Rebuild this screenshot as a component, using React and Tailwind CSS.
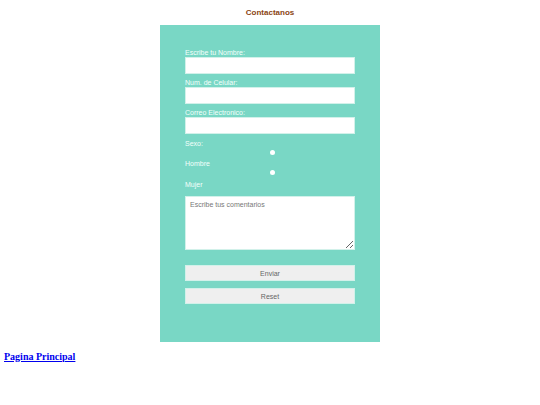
import React from 'react';

const Label = ({ children, className = '' }) => (
  <label className={`block h-[8px] text-[7px] leading-[8px] text-[#f4fffb] ${className}`}>{children}</label>
);

const Field = () => (
  <input type="text" className="block h-[17px] w-full border border-[#d2f1ea] bg-white outline-none" />
);

const Radio = ({ name }) => (
  <div className="mt-[1px] flex h-[6px] items-center justify-center pl-[5px]">
    <input type="radio" name={name} className="h-[5px] w-[5px] appearance-none rounded-full bg-white" />
  </div>
);

const App = () => {
  return (
    <div className="min-h-[405px] bg-white" style={{ fontFamily: '"Liberation Sans", Arial, sans-serif' }}>
      {/* Titulo */}
      <div className="flex h-[25px] items-center justify-center">
        <h2 className="text-[8px] font-bold leading-none text-[#8b4513]">Contactanos</h2>
      </div>

      {/* Formulario */}
      <form className="mx-auto h-[317px] w-[220px] bg-[#79d7c5] px-[25px] pt-[24px]" onSubmit={(e) => e.preventDefault()}>
        <Label>Escribe tu Nombre:</Label>
        <Field />
        <Label className="mt-[5px]">Num. de Celular:</Label>
        <Field />
        <Label className="mt-[5px]">Correo Electronico:</Label>
        <Field />

        <Label className="mt-[6px]">Sexo:</Label>
        <Radio name="sexo" />
        <Label className="mt-[5px]">Hombre</Label>
        <Radio name="sexo" />
        <Label className="mt-[6px]">Mujer</Label>

        <textarea
          placeholder="Escribe tus comentarios"
          className="mt-[7px] block h-[54px] w-full border border-[#d2f1ea] bg-white px-[4px] py-[3px] text-[7px] leading-[9px] text-gray-700 outline-none placeholder:text-[#777]"
        />

        <button type="submit" className="mt-[15px] block h-[16px] w-full border border-[#d2f1ea] bg-[#efefef] text-[7px] leading-none text-[#666]">
          Enviar
        </button>
        <button type="reset" className="mt-[7px] block h-[16px] w-full border border-[#d2f1ea] bg-[#efefef] text-[7px] leading-none text-[#666]">
          Reset
        </button>
      </form>

      {/* Enlace */}
      <div className="mt-[9px] pl-[4px] text-[10px] leading-[12px]" style={{ fontFamily: '"Liberation Serif", "Times New Roman", serif' }}>
        <a href="#" className="font-bold text-[#0000ee] underline">
          Pagina Principal
        </a>
      </div>
    </div>
  );
};

export default App;
